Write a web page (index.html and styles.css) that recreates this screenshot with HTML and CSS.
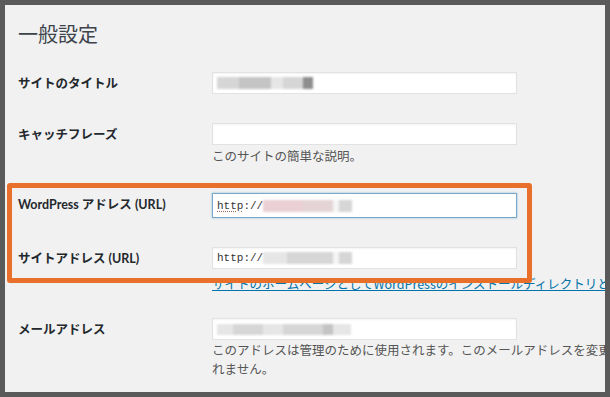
FILE: index.html
```html
<!DOCTYPE html>
<html lang="ja">
<head>
  <meta charset="UTF-8" />
  <meta name="viewport" content="width=device-width, initial-scale=1.0" />
  <title>一般設定</title>
  <link rel="stylesheet" href="styles.css">
</head>
<body>
  <div class="screen">
    <h1>一般設定</h1>

    <div class="form-table">
      <div class="row">
        <div class="label">サイトのタイトル</div>
        <div class="field-cell">
          <div class="field">
            <span class="mosaic">
              <span class="m m-light" style="width:22px"></span>
              <span class="m m-mid" style="width:32px"></span>
              <span class="m m-pale" style="width:12px"></span>
              <span class="m m-light" style="width:20px"></span>
              <span class="m m-dark" style="width:10px"></span>
            </span>
          </div>
        </div>
      </div>

      <div class="row">
        <div class="label">キャッチフレーズ</div>
        <div class="field-cell">
          <div class="field"></div>
          <p class="description">このサイトの簡単な説明。</p>
        </div>
      </div>

      <div class="row">
        <div class="label">WordPress アドレス (URL)</div>
        <div class="field-cell">
          <div class="field field-focus">
            <span class="url"><span class="spell">http</span>://</span>
            <span class="mosaic">
              <span class="m m-pink" style="width:40px"></span>
              <span class="m m-pink2" style="width:30px"></span>
              <span class="m m-white" style="width:6px"></span>
              <span class="m m-light" style="width:13px"></span>
            </span>
          </div>
        </div>
      </div>

      <div class="row row-tight">
        <div class="label">サイトアドレス (URL)</div>
        <div class="field-cell">
          <div class="field">
            <span class="url">http://</span>
            <span class="mosaic">
              <span class="m m-pale" style="width:24px"></span>
              <span class="m m-light" style="width:46px"></span>
              <span class="m m-white" style="width:6px"></span>
              <span class="m m-light" style="width:13px"></span>
            </span>
          </div>
          <p class="description link-line"><a href="#">サイトのホームページとしてWordPressのインストールディレクトリと異なる場所を設定する場合は、ここにアドレスを入力してください。</a></p>
        </div>
      </div>

      <div class="row">
        <div class="label">メールアドレス</div>
        <div class="field-cell">
          <div class="field">
            <span class="mosaic mosaic-mail">
              <span class="m m-pale" style="width:16px"></span>
              <span class="m m-light" style="width:30px"></span>
              <span class="m m-pale" style="width:20px"></span>
              <span class="m m-light" style="width:40px"></span>
              <span class="m m-mid" style="width:10px"></span>
              <span class="m m-pale" style="width:18px"></span>
            </span>
          </div>
          <p class="description mail-note">このアドレスは管理のために使用されます。このメールアドレスを変更すると、新しいアドレスで確認が完了するまで変更は反映さ<br>れません。</p>
        </div>
      </div>
    </div>

    <!-- highlight frame over the URL rows -->
    <div class="highlight"></div>
  </div>
</body>
</html>
```

FILE: styles.css
```css
body {
  margin: 0;
  background: #5a5a5a;
  font-family: "Noto Sans CJK JP", "Noto Sans", sans-serif;
  color: #23282d;
}

.screen {
  position: relative;
  margin: 5px;
  width: 587px;
  height: 387px;
  padding-left: 13px;
  background: #f1f1f1;
  overflow: hidden;
}

h1 {
  margin: 15px 0 0;
  font-size: 20px;
  line-height: 28px;
  font-weight: 400;
  color: #3c434a;
}

.form-table {
  margin-top: 9px;
}

.row {
  display: grid;
  grid-template-columns: 194px 1fr;
  align-items: start;
  padding: 15px 0 14px;
}

.row-tight {
  padding-bottom: 10px;
}

.label {
  padding-top: 3px;
  font-family: Lato, "Noto Sans CJK JP", sans-serif;
  font-size: 12.5px;
  line-height: 18px;
  font-weight: 700;
  white-space: nowrap;
}

.field {
  display: flex;
  align-items: center;
  box-sizing: border-box;
  width: 305px;
  height: 22px;
  padding: 0 4px;
  background: #fff;
  border: 1px solid #e2e2e2;
  box-shadow: inset 0 1px 2px rgba(0, 0, 0, 0.05);
}

.field-focus {
  height: 25px;
  border-color: #7aa7cc;
  box-shadow: 0 0 2px rgba(30, 140, 190, 0.5);
}

.url {
  font-family: "Liberation Mono", "DejaVu Sans Mono", monospace;
  font-size: 11px;
  color: #333;
}

.spell {
  text-decoration: underline dotted #9a6b5a;
  text-underline-offset: 2px;
}

.mosaic {
  display: flex;
  height: 12px;
  filter: blur(1px);
}

.mosaic-mail {
  height: 11px;
}

.m {
  display: block;
  height: 100%;
}

.m-white { background: #f4f4f4; }
.m-pale { background: #e6e6e6; }
.m-light { background: #d6d6d6; }
.m-mid { background: #c4c4c4; }
.m-dark { background: #8e8e8e; }
.m-pink { background: #ead0d4; }
.m-pink2 { background: #e4d4d6; }

.description {
  margin: 3px 0 0;
  font-size: 12.5px;
  line-height: 16px;
  color: #555;
  white-space: nowrap;
}

.link-line {
  margin-top: 6px;
  line-height: 18px;
}

.link-line a {
  color: #0073aa;
}

.mail-note {
  margin-top: 0;
  line-height: 19px;
}

.highlight {
  position: absolute;
  left: 2px;
  top: 178px;
  width: 515px;
  height: 90px;
  border: 5px solid #e8702a;
  border-radius: 3px;
}
```
